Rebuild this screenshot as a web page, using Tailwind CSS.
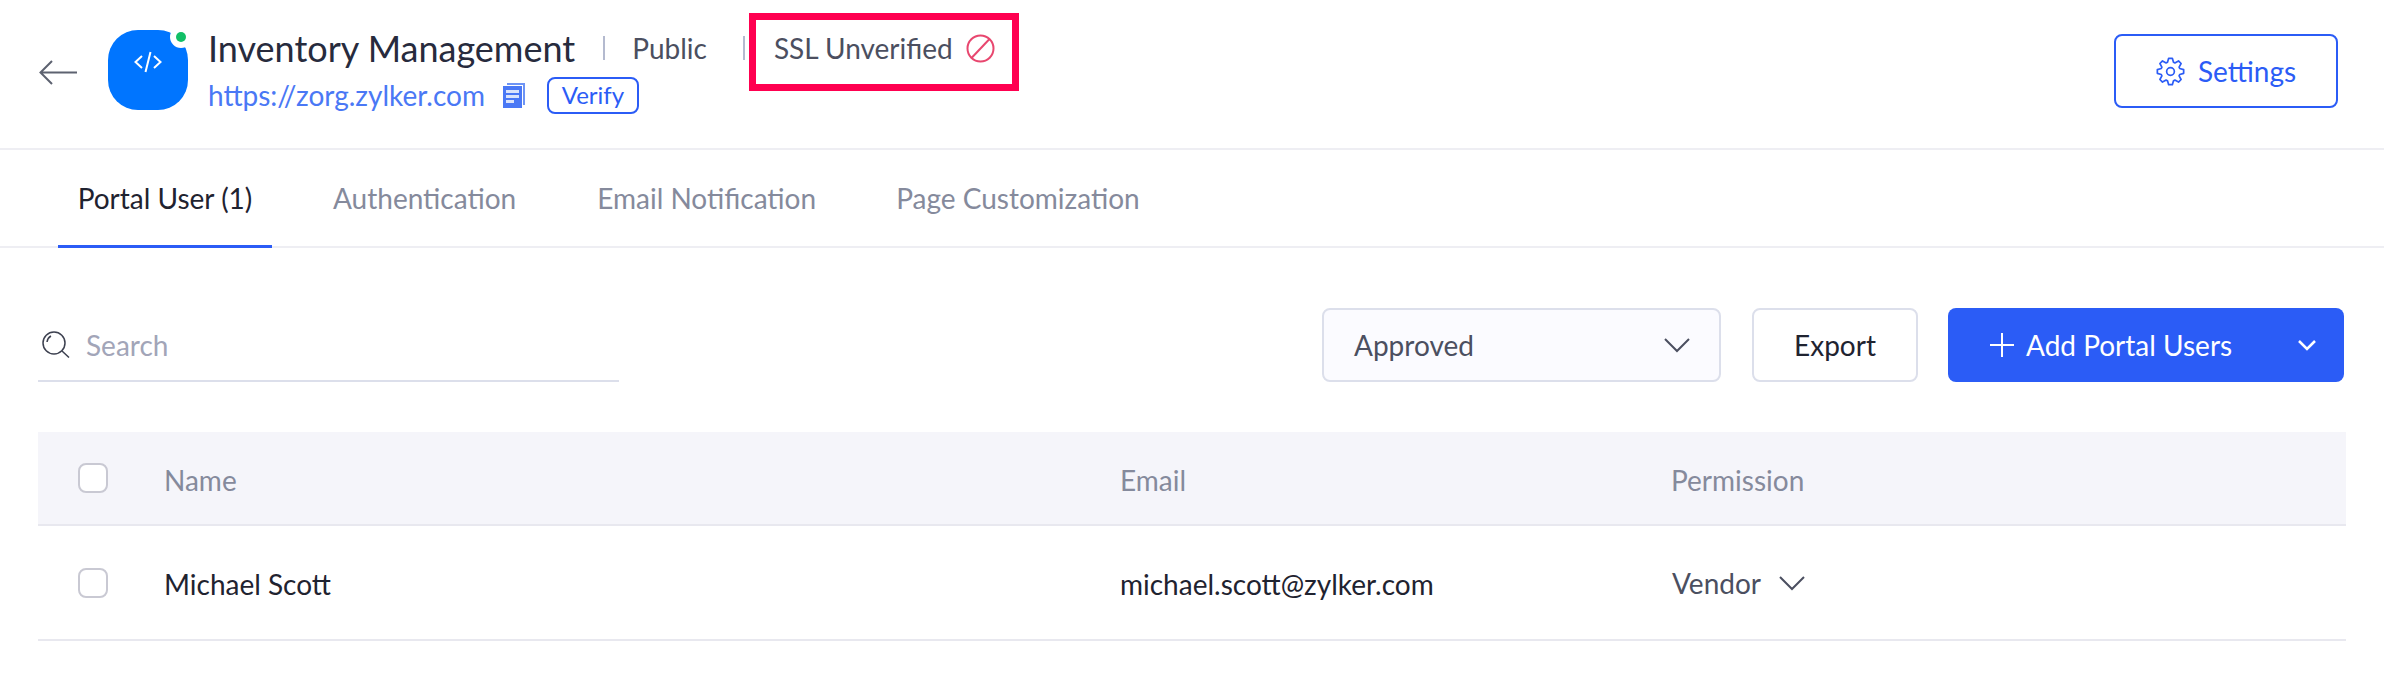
<!DOCTYPE html>
<html lang="en">
<head>
    <meta charset="UTF-8">
    <title>Inventory Management</title>
    <script src="https://cdn.jsdelivr.net/npm/@tailwindcss/browser@4"></script>
</head>
<body class="bg-white font-['Lato',sans-serif] text-[#1f2330]">

    <!-- Header -->
    <div class="h-[150px] border-b-2 border-[#eeeef3] flex pl-[39px] pr-[46px]">
        <div class="flex items-start flex-1">
            <svg class="mt-[60px] w-[38px] h-[25px] text-[#5d6270]" viewBox="0 0 38 25" fill="none" stroke="currentColor" stroke-width="2"><path d="M38 12.5H1.5M13 1 1.5 12.5 13 24"/></svg>

            <div class="relative ml-[31px] mt-[30px] w-[80px] h-[80px] bg-[#0075ff] rounded-[30px] flex items-center justify-center">
                <svg class="w-[28px] h-[22px] -mt-[16px]" viewBox="0 0 28 22" fill="none" stroke="#fff" stroke-width="2"><path d="M8 5 1.5 11 8 17M20 5l6.5 6L20 17M16.5 1 11.5 21"/></svg>
                <span class="absolute -top-[4px] -right-[4px] w-[22px] h-[22px] rounded-full bg-white flex items-center justify-center">
                    <span class="w-[10px] h-[10px] rounded-full bg-[#12bf66]"></span>
                </span>
            </div>

            <div class="ml-[20px] mt-[26px]">
                <div class="flex items-center h-[44px]">
                    <span class="text-[36px] text-[#272b3d]">Inventory Management</span>
                    <span class="ml-[28px] w-[2px] h-[24px] bg-[#b4bacf]"></span>
                    <span class="ml-[27px] text-[28px] text-[#4b4f60]">Public</span>
                    <span class="ml-[36px] w-[2px] h-[24px] bg-[#b4bacf]"></span>
                    <span class="relative ml-[29px] flex items-center text-[28px] text-[#4b4f60]">
                        SSL Unverified
                        <svg class="ml-[13px] w-[29px] h-[29px]" viewBox="0 0 29 29" fill="none" stroke="#e8476f" stroke-width="2"><circle cx="14.5" cy="14.5" r="13"/><path d="M5.5 24 23.5 5"/></svg>
                        <span class="absolute -left-[25px] -right-[24px] -top-[14px] -bottom-[22px] border-[7px] border-[#ff0050]"></span>
                    </span>
                </div>
                <div class="flex items-center mt-[4px]">
                    <span class="text-[28px] text-[#4a78f5]">https://zorg.zylker.com</span>
                    <svg class="ml-[18px] w-[22px] h-[25px]" viewBox="0 0 22 25"><path d="M4 0h18v22h-2V2H4z" fill="#6d94f5"/><path d="M0 3h19v22H0z" fill="#4a78f5"/><path d="M3 7h13v3H3zM3 12h13v3H3zM3 17h8v3H3z" fill="#dbe4fb"/></svg>
                    <span class="ml-[22px] w-[92px] h-[37px] border-2 border-[#2b5cf6] rounded-[8px] flex items-center justify-center text-[24px] text-[#2b5cf6]">Verify</span>
                </div>
            </div>
        </div>
        <button class="mt-[34px] w-[224px] h-[74px] border-2 border-[#2b5cf6] rounded-[8px] flex items-center justify-center text-[28px] text-[#2b5cf6]">
            <svg class="mr-[13px] w-[29px] h-[29px]" viewBox="0 0 24 24" fill="none" stroke="currentColor" stroke-width="1.4" stroke-linejoin="round"><circle cx="12" cy="12" r="3.2"/><path d="M9.53 4.39 10.47 1.11H13.53L14.47 4.39 15.63 4.87 18.62 3.22 20.78 5.38 19.13 8.37 19.61 9.53 22.89 10.47V13.53L19.61 14.47 19.13 15.63 20.78 18.62 18.62 20.78 15.63 19.13 14.47 19.61 13.53 22.89H10.47L9.53 19.61 8.37 19.13 5.38 20.78 3.22 18.62 4.87 15.63 4.39 14.47 1.11 13.53V10.47L4.39 9.53 4.87 8.37 3.22 5.38 5.38 3.22 8.37 4.87Z"/></svg>
            Settings
        </button>
    </div>

    <!-- Tabs -->
    <div class="h-[98px] border-b-2 border-[#eeeef3] flex pl-[58px] text-[28px] text-[#858a9c]">
        <div class="w-[214px] h-[98px] border-b-[3px] border-[#2b5cf6] flex items-center justify-center text-[#1f2330]">Portal User (1)</div>
        <div class="ml-[61px] flex items-center">Authentication</div>
        <div class="ml-[81px] flex items-center">Email Notification</div>
        <div class="ml-[80px] flex items-center">Page Customization</div>
    </div>

    <!-- Toolbar -->
    <div class="mt-[60px] h-[74px] flex justify-between pl-[38px] pr-[40px]">
        <div class="w-[581px] h-[74px] pl-[4px] border-b-2 border-[#dcdfeb] flex items-center">
            <svg class="w-[28px] h-[27px]" viewBox="0 0 28 27" fill="none" stroke="#3d4150" stroke-width="1.5"><circle cx="12" cy="12" r="11"/><path d="M20 20l7 6.5M5 11c.5-3 2-5 4-6"/></svg>
            <span class="ml-[16px] pt-[2px] text-[28px] text-[#a2a5b8]">Search</span>
        </div>
        <div class="flex">
            <div class="w-[399px] h-[74px] border-2 border-[#dcdfeb] rounded-[8px] bg-[#fbfbff] flex items-center justify-between pl-[30px] pr-[29px] text-[28px] text-[#4b4f60]">
                Approved
                <svg class="w-[26px] h-[16px]" viewBox="0 0 26 16" fill="none" stroke="#4b4f60" stroke-width="2"><path d="M1 2l12 12L25 2"/></svg>
            </div>
            <div class="ml-[31px] w-[166px] h-[74px] border-2 border-[#dcdfeb] rounded-[8px] flex items-center justify-center text-[28px] text-[#1f2330]">Export</div>
            <div class="ml-[30px] w-[396px] h-[74px] rounded-[8px] bg-[#2b5cf6] flex items-center pl-[42px] text-[28px] text-white">
                <svg class="w-[24px] h-[24px]" viewBox="0 0 24 24" fill="none" stroke="#fff" stroke-width="2"><path d="M12 0v24M0 12h24"/></svg>
                <span class="ml-[12px]">Add Portal Users</span>
                <svg class="ml-[65px] w-[20px] h-[12px]" viewBox="0 0 20 12" fill="none" stroke="#fff" stroke-width="2.5"><path d="M2 2l8 8 8-8"/></svg>
            </div>
        </div>
    </div>

    <!-- Table -->
    <div class="mt-[50px] ml-[38px] mr-[38px]">
        <div class="h-[94px] bg-[#f5f5fa] border-b-2 border-[#e8e8ef] grid grid-cols-[126px_956px_551px_1fr] items-center text-[28px] text-[#858a9c]">
            <span class="ml-[40px] w-[30px] h-[30px] border-2 border-[#c9c9d3] rounded-[8px] bg-white"></span>
            <span class="pt-[3px]">Name</span>
            <span class="pt-[3px]">Email</span>
            <span class="pt-[3px]">Permission</span>
        </div>
        <div class="h-[115px] border-b-2 border-[#e8e8ef] grid grid-cols-[126px_956px_551px_1fr] items-center text-[28px] text-[#1f2330]">
            <span class="ml-[40px] w-[30px] h-[30px] border-2 border-[#c9c9d3] rounded-[8px] bg-white"></span>
            <span class="pt-[2px]">Michael Scott</span>
            <span class="pt-[2px]">michael.scott@zylker.com</span>
            <span class="pl-[1px] flex items-center text-[#4b4f60]">Vendor
                <svg class="ml-[18px] w-[26px] h-[16px]" viewBox="0 0 26 16" fill="none" stroke="#4b4f60" stroke-width="2"><path d="M1 2l12 12L25 2"/></svg>
            </span>
        </div>
    </div>

</body>
</html>
